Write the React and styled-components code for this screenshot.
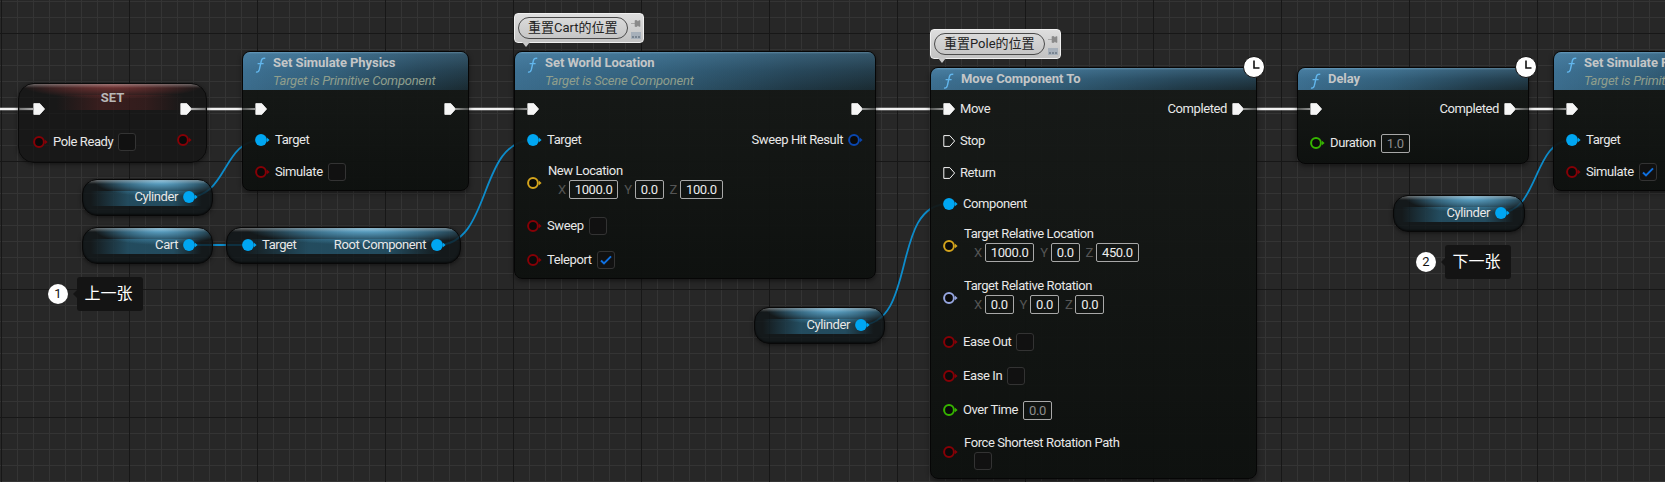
import React from "react";
import styled, { createGlobalStyle } from "styled-components";

const GlobalStyle = createGlobalStyle`
  html, body { margin: 0; padding: 0; background: #272727; overflow: hidden; }
  body { font-family: Roboto, "Noto Sans CJK SC", sans-serif; }
`;

const Canvas = styled.div`
  position: relative;
  width: 1665px;
  height: 482px;
  overflow: hidden;
  background-color: #272727;
  background-image:
    linear-gradient(to right, #171717 1px, transparent 1px),
    linear-gradient(to bottom, #171717 1px, transparent 1px),
    linear-gradient(to right, #343434 1px, transparent 1px),
    linear-gradient(to bottom, #343434 1px, transparent 1px);
  background-size: 128px 128px, 128px 128px, 16px 16px, 16px 16px;
  background-position: 1px 0, 0 33px, 1px 0, 0 1px;
`;

const WireLayer = styled.svg`
  position: absolute;
  left: 0;
  top: 0;
`;

/* nodes sit on a free canvas, so x/y are the content here */
const Node = styled.div`
  position: absolute;
  left: ${(p) => p.$x}px;
  top: ${(p) => p.$y}px;
  width: ${(p) => p.$w}px;
  box-sizing: border-box;
  border: 1px solid #060606;
  border-radius: 8px;
  background: linear-gradient(180deg, rgba(22, 25, 23, 0.94), rgba(13, 16, 14, 0.95));
  box-shadow: 0 2px 5px rgba(0, 0, 0, 0.45);
  color: #e8e8e8;
  font-size: 13px;
  letter-spacing: -0.4px;
`;

const Header = styled.div`
  height: ${(p) => (p.$sub ? 38 : 22)}px;
  box-sizing: border-box;
  padding: 2px 0 0 12px;
  display: flex;
  gap: 6px;
  border-radius: 7px 7px 0 0;
  background:
    linear-gradient(180deg, rgba(140, 195, 230, 0.55) 0, rgba(90, 150, 190, 0.4) 2px, rgba(70, 130, 170, 0.22) 50%, rgba(20, 30, 36, 0) 100%),
    linear-gradient(90deg, #3b6c8c 0, #2f5870 40%, #1f3744 78%, #1a2a31 100%);
`;

const HeaderText = styled.div`
  display: flex;
  flex-direction: column;
  white-space: nowrap;
`;

const Title = styled.div`
  font-weight: 700;
  font-size: 13px;
  letter-spacing: -0.05px;
  line-height: 18px;
  color: #c4c6c7;
`;

const Subtitle = styled.div`
  font-style: italic;
  font-size: 13px;
  letter-spacing: -0.25px;
  line-height: 17px;
  color: #8f9e8c;
`;

const Body = styled.div`
  padding: 3px 0 2px 0;
`;

const Row = styled.div`
  height: ${(p) => p.$h || 32}px;
  display: flex;
  align-items: center;
  justify-content: space-between;
  padding: 0 12px;
`;

const Side = styled.div`
  display: flex;
  align-items: center;
  gap: ${(p) => p.$gap ?? 5}px;
  white-space: nowrap;
`;

const Label = styled.span`
  line-height: 16px;
`;

const PinBox = styled.span`
  position: relative;
  display: inline-flex;
  flex: none;
  margin-bottom: ${(p) => p.$lift || 0}px;
  &::before {
    content: "";
    display: ${(p) => (p.$stub ? "block" : "none")};
    position: absolute;
    top: 5px;
    height: 2px;
    width: 13px;
    ${(p) => (p.$stub === "left" ? "right: 100%;" : "left: 100%;")}
    background: ${(p) =>
      p.$stub === "left"
        ? "linear-gradient(90deg, rgba(255,255,255,.22), rgba(255,255,255,.5))"
        : "linear-gradient(90deg, rgba(255,255,255,.5), rgba(255,255,255,.2))"};
  }
`;

const ExecPin = ({ hollow, stub }) => (
  <PinBox $stub={stub}>
    <svg width="12" height="12" viewBox="0 0 12 12">
      <path
        d="M.8.6H6.8L11.6 6 6.8 11.4H.8Z"
        fill={hollow ? "none" : "#f6f6f6"}
        stroke="#f6f6f6"
        strokeWidth={hollow ? 1 : 0.8}
        strokeLinejoin="round"
      />
    </svg>
  </PinBox>
);

const DataPin = ({ color, filled, lift }) => (
  <PinBox $lift={lift}>
    <svg width="15" height="12" viewBox="0 0 15 12">
      <circle
        cx="6"
        cy="6"
        r={filled ? 5.9 : 4.9}
        fill={filled ? color : "#0a0a0a"}
        stroke={color}
        strokeWidth={filled ? 0 : 2}
      />
      <path d="M12 3.8 14.6 6 12 8.2Z" fill={color} />
    </svg>
  </PinBox>
);

const VectorBlock = styled.div`
  display: flex;
  flex-direction: column;
  gap: 1px;
  margin-top: ${(p) => p.$up || 0}px;
`;

const Axes = styled.div`
  display: flex;
  align-items: center;
  gap: 3px;
  padding-left: 10px;
`;

const Axis = styled.span`
  color: #555;
  margin-left: ${(p) => (p.$first ? 0 : 3)}px;
`;

const ValueBox = styled.span`
  display: inline-block;
  box-sizing: border-box;
  height: 19px;
  line-height: 17px;
  padding: 0 5px;
  border: 1px solid #a8a8a8;
  border-radius: 2px;
  color: ${(p) => (p.$dim ? "#8c8c8c" : "#ececec")};
  font-size: 13px;
  letter-spacing: -0.4px;
`;

const CheckBox = styled.span`
  display: inline-flex;
  align-items: center;
  justify-content: center;
  box-sizing: border-box;
  width: 18px;
  height: 18px;
  border: 1px solid #333;
  border-radius: 3px;
  background: #111;
`;

const Check = ({ on }) => (
  <CheckBox>
    {on && (
      <svg width="12" height="10" viewBox="0 0 12 10">
        <path d="M1 5.5 4 8.4 11 1.4" fill="none" stroke="#0f70e0" strokeWidth="2" />
      </svg>
    )}
  </CheckBox>
);

const FuncIcon = () => (
  <svg width="12" height="16" viewBox="0 0 12 16" style={{ marginTop: 3, flex: "none" }}>
    <path
      d="M1 15c2 .5 2.8-.3 3.4-2.6L6.3 4c.5-2.2 1.6-3.2 4-2.6M2.6 6.6h6"
      fill="none"
      stroke="#62b6ec"
      strokeWidth="1.4"
    />
  </svg>
);

const ClockBadge = styled.span`
  position: absolute;
  top: -12px;
  right: -9px;
  width: 22px;
  height: 22px;
  display: flex;
  border-radius: 50%;
  background: #fff;
  border: 1px solid #111;
  box-sizing: border-box;
`;

const Clock = () => (
  <ClockBadge>
    <svg width="20" height="20" viewBox="0 0 20 20">
      <path d="M10 3.5V11H15.5" fill="none" stroke="#111" strokeWidth="1.6" />
    </svg>
  </ClockBadge>
);

const Bubble = styled.div`
  position: absolute;
  left: -1px;
  bottom: calc(100% + 9px);
  height: 30px;
  box-sizing: border-box;
  padding: 3px 0 0 3px;
  display: flex;
  gap: 3px;
  border: 1px solid #f0f0f0;
  border-radius: 4px;
  background: linear-gradient(180deg, #dedede, #c2c2c2);
  letter-spacing: 0;
  &::after {
    content: "";
    position: absolute;
    left: 7px;
    top: 100%;
    border: 4px solid transparent;
    border-top: 5px solid #c8c8c8;
    border-bottom: 0;
  }
`;

const Pill = styled.div`
  height: 22px;
  box-sizing: border-box;
  padding: 0 9px;
  border: 1px solid #4a4a4a;
  border-radius: 11px;
  color: #222;
  font-size: 13px;
  line-height: 20px;
  white-space: nowrap;
`;

const BubbleTools = styled.div`
  display: flex;
  flex-direction: column;
  gap: 5px;
  padding: 3px 2px 0 0;
`;

const Comment = ({ children }) => (
  <Bubble>
    <Pill>{children}</Pill>
    <BubbleTools>
      <svg width="10" height="7" viewBox="0 0 10 7">
        <path d="M0 3.5H4M4 .5H6V6.5H4ZM6 1.5 9 .5V6.5L6 5.5Z" fill="#8a8a8a" stroke="#8a8a8a" strokeWidth=".6" />
      </svg>
      <svg width="10" height="7" viewBox="0 0 10 7">
        <rect width="10" height="7" fill="#a7b0ba" />
        <path d="M1 5H3M4 5H6M7 5H9" stroke="#4c5a68" strokeWidth="1" />
      </svg>
    </BubbleTools>
  </Bubble>
);

const VarNode = styled.div`
  position: absolute;
  left: ${(p) => p.$x}px;
  top: ${(p) => p.$y}px;
  width: ${(p) => p.$w}px;
  height: 37px;
  box-sizing: border-box;
  border: 1px solid #080808;
  border-radius: 15px;
  padding: 9px 14px 0 15px;
  display: flex;
  align-items: flex-start;
  justify-content: ${(p) => (p.$split ? "space-between" : "flex-end")};
  color: #e8e8e8;
  font-size: 13px;
  letter-spacing: -0.4px;
  overflow: hidden;
  background:
    linear-gradient(180deg, rgba(190, 190, 190, 0.5), rgba(190, 190, 190, 0) 4px),
    radial-gradient(ellipse 52% 17px at 60% 0, rgba(110, 190, 230, 1), rgba(75, 155, 195, 0.55) 60%, transparent),
    linear-gradient(90deg, transparent 6%, rgba(50, 125, 160, 0.5) 35%, rgba(50, 125, 160, 0.5) 70%, transparent 92%) 0 11px / 100% 15px no-repeat,
    rgba(16, 22, 24, 0.78);
  box-shadow: 0 1px 4px rgba(0, 0, 0, 0.5), inset 0 -1px 2px rgba(0, 0, 0, 0.6);
`;

const SetNode = styled.div`
  position: absolute;
  left: 18px;
  top: 83px;
  width: 189px;
  height: 80px;
  box-sizing: border-box;
  border: 1px solid #0a0a0a;
  border-radius: 16px;
  color: #e8e8e8;
  font-size: 13px;
  letter-spacing: -0.4px;
  background:
    linear-gradient(180deg, rgba(190, 190, 190, 0.45), rgba(190, 190, 190, 0) 4px),
    radial-gradient(ellipse 50% 15px at 50% 0, rgba(150, 62, 62, 0.85), rgba(125, 50, 50, 0.35) 70%, transparent),
    linear-gradient(90deg, transparent 20%, rgba(115, 40, 40, 0.38) 45%, rgba(115, 40, 40, 0.28) 68%, transparent 88%) 0 11px / 100% 15px no-repeat,
    rgba(18, 18, 18, 0.7);
  box-shadow: 0 1px 4px rgba(0, 0, 0, 0.5);
`;

const SetTitle = styled.div`
  text-align: center;
  padding-top: 5px;
  line-height: 17px;
  height: 12px;
  font-weight: 700;
  letter-spacing: 0;
  color: #b8b8b8;
  font-size: 13px;
`;

const SetRow = styled.div`
  display: flex;
  justify-content: space-between;
  align-items: center;
  box-sizing: border-box;
  padding: ${(p) => p.$top || 0}px 14px 0;
  height: ${(p) => p.$h}px;
`;

const Tag = styled.div`
  position: absolute;
  left: ${(p) => p.$x}px;
  top: ${(p) => p.$y}px;
  display: flex;
  align-items: center;
  gap: 9px;
`;

const TagBadge = styled.span`
  width: 20px;
  height: 20px;
  border-radius: 50%;
  background: #fff;
  color: #111;
  font-size: 13px;
  line-height: 20px;
  text-align: center;
`;

const TagText = styled.span`
  position: relative;
  width: 66px;
  height: 34px;
  box-sizing: border-box;
  padding-right: 3px;
  border-radius: 3px;
  background: #141414;
  color: #fff;
  font-size: 16px;
  line-height: 34px;
  text-align: center;
  &::before {
    content: "";
    position: absolute;
    right: 100%;
    top: 13px;
    border: 4px solid transparent;
    border-right: 4px solid #141414;
    border-left: 0;
  }
`;

const Pin = { blue: "#00a6f2", red: "#860006", gold: "#d4a41c", lilac: "#96a6e0", green: "#36b400", navy: "#0a47b0" };

const execWires = [
  [0, 33],
  [191, 255],
  [455, 527],
  [863, 943],
  [1243, 1312],
  [1515, 1567],
];

const blueWires = [
  "M188 197C228 197 222 140 262 140",
  "M188 245H247",
  "M437 245C493 245 477 140 533 140",
  "M860 325C918 325 890 204 948 204",
  "M1499 213C1540 213 1532 140 1572 140",
];

const SetSimulate = ({ x, checked }) => (
  <Node $x={x} $y={51} $w={227}>
    <Header $sub>
      <FuncIcon />
      <HeaderText>
        <Title>Set Simulate Physics</Title>
        <Subtitle>Target is Primitive Component</Subtitle>
      </HeaderText>
    </Header>
    <Body>
      <Row $h={31}>
        <ExecPin stub="left" />
        <ExecPin stub="right" />
      </Row>
      <Row>
        <Side>
          <DataPin color={Pin.blue} filled />
          <Label>Target</Label>
        </Side>
      </Row>
      <Row>
        <Side>
          <DataPin color={Pin.red} />
          <Label>Simulate</Label>
          <Check on={checked} />
        </Side>
      </Row>
    </Body>
  </Node>
);

const PinRow = ({ h, color, filled, label, children }) => (
  <Row $h={h}>
    <Side>
      <DataPin color={color} filled={filled} />
      <Label>{label}</Label>
      {children}
    </Side>
  </Row>
);

const VectorRow = ({ h, color, label, values }) => (
  <Row $h={h}>
    <Side $gap={6}>
      <DataPin color={color} />
      <VectorBlock $up={-4}>
        <Label>{label}</Label>
        <Axes>
          {["X", "Y", "Z"].map((a, i) => (
            <React.Fragment key={a}>
              <Axis $first={i === 0}>{a}</Axis>
              <ValueBox>{values[i]}</ValueBox>
            </React.Fragment>
          ))}
        </Axes>
      </VectorBlock>
    </Side>
  </Row>
);

export default function App() {
  return (
    <Canvas>
      <GlobalStyle />
      <WireLayer width="1665" height="482">
        {execWires.map(([a, b]) => (
          <path key={a} d={`M${a} 109H${b}`} stroke="#f1f1f1" strokeWidth="2.4" />
        ))}
        {blueWires.map((d) => (
          <path key={d} d={d} fill="none" stroke="#0d8ccb" strokeWidth="1.8" />
        ))}
      </WireLayer>

      <SetNode>
        <SetTitle>SET</SetTitle>
        <SetRow $h={16}>
          <ExecPin stub="left" />
          <ExecPin stub="right" />
        </SetRow>
        <SetRow $h={45} $top={4}>
          <Side>
            <DataPin color={Pin.red} />
            <Label>Pole Ready</Label>
            <Check />
          </Side>
          <DataPin color={Pin.red} lift={3} />
        </SetRow>
      </SetNode>

      <SetSimulate x={242} />

      <VarNode $x={82} $y={179} $w={131}>
        <Side>
          <Label>Cylinder</Label>
          <DataPin color={Pin.blue} filled />
        </Side>
      </VarNode>
      <VarNode $x={82} $y={227} $w={131}>
        <Side>
          <Label>Cart</Label>
          <DataPin color={Pin.blue} filled />
        </Side>
      </VarNode>
      <VarNode $x={226} $y={227} $w={235} $split>
        <Side>
          <DataPin color={Pin.blue} filled />
          <Label>Target</Label>
        </Side>
        <Side>
          <Label>Root Component</Label>
          <DataPin color={Pin.blue} filled />
        </Side>
      </VarNode>

      <Tag $x={48} $y={277}>
        <TagBadge>1</TagBadge>
        <TagText>上一张</TagText>
      </Tag>

      <Node $x={514} $y={51} $w={362}>
        <Comment>重置Cart的位置</Comment>
        <Header $sub>
          <FuncIcon />
          <HeaderText>
            <Title>Set World Location</Title>
            <Subtitle>Target is Scene Component</Subtitle>
          </HeaderText>
        </Header>
        <Body>
          <Row $h={31}>
            <ExecPin stub="left" />
            <ExecPin stub="right" />
          </Row>
          <Row>
            <Side>
              <DataPin color={Pin.blue} filled />
              <Label>Target</Label>
            </Side>
            <Side>
              <Label>Sweep Hit Result</Label>
              <DataPin color={Pin.navy} />
            </Side>
          </Row>
          <VectorRow h={53} color={Pin.gold} label="New Location" values={["1000.0", "0.0", "100.0"]} />
          <PinRow h={34} color={Pin.red} label="Sweep">
            <Check />
          </PinRow>
          <PinRow h={33} color={Pin.red} label="Teleport">
            <Check on />
          </PinRow>
        </Body>
      </Node>

      <VarNode $x={754} $y={307} $w={131}>
        <Side>
          <Label>Cylinder</Label>
          <DataPin color={Pin.blue} filled />
        </Side>
      </VarNode>

      <Node $x={930} $y={67} $w={327}>
        <Comment>重置Pole的位置</Comment>
        <Clock />
        <Header>
          <FuncIcon />
          <Title>Move Component To</Title>
        </Header>
        <Body>
          <Row $h={32}>
            <Side>
              <ExecPin stub="left" />
              <Label>Move</Label>
            </Side>
            <Side>
              <Label>Completed</Label>
              <ExecPin stub="right" />
            </Side>
          </Row>
          <Row>
            <Side>
              <ExecPin hollow />
              <Label>Stop</Label>
            </Side>
          </Row>
          <Row>
            <Side>
              <ExecPin hollow />
              <Label>Return</Label>
            </Side>
          </Row>
          <PinRow h={30} color={Pin.blue} filled label="Component" />
          <VectorRow h={53} color={Pin.gold} label="Target Relative Location" values={["1000.0", "0.0", "450.0"]} />
          <VectorRow h={52} color={Pin.lilac} label="Target Relative Rotation" values={["0.0", "0.0", "0.0"]} />
          <PinRow h={36} color={Pin.red} label="Ease Out">
            <Check />
          </PinRow>
          <PinRow h={32} color={Pin.red} label="Ease In">
            <Check />
          </PinRow>
          <PinRow h={36} color={Pin.green} label="Over Time">
            <ValueBox $dim>0.0</ValueBox>
          </PinRow>
          <Row $h={48}>
            <Side $gap={6}>
              <DataPin color={Pin.red} />
              <VectorBlock>
                <Label>Force Shortest Rotation Path</Label>
                <Axes>
                  <Check />
                </Axes>
              </VectorBlock>
            </Side>
          </Row>
        </Body>
      </Node>

      <Node $x={1297} $y={67} $w={232}>
        <Clock />
        <Header>
          <FuncIcon />
          <Title>Delay</Title>
        </Header>
        <Body>
          <Row $h={32}>
            <ExecPin stub="left" />
            <Side>
              <Label>Completed</Label>
              <ExecPin stub="right" />
            </Side>
          </Row>
          <PinRow h={36} color={Pin.green} label="Duration">
            <ValueBox $dim>1.0</ValueBox>
          </PinRow>
        </Body>
      </Node>

      <VarNode $x={1393} $y={195} $w={132}>
        <Side>
          <Label>Cylinder</Label>
          <DataPin color={Pin.blue} filled />
        </Side>
      </VarNode>

      <SetSimulate x={1553} checked />

      <Tag $x={1416} $y={245}>
        <TagBadge>2</TagBadge>
        <TagText>下一张</TagText>
      </Tag>
    </Canvas>
  );
}
